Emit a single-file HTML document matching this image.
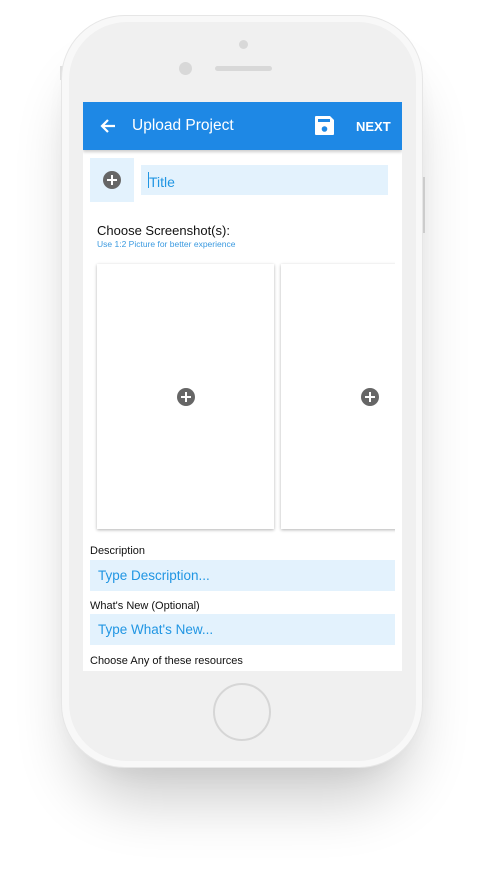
<!DOCTYPE html>
<html><head><style>
*{margin:0;padding:0;box-sizing:border-box}
body{width:485px;height:871px;background:#fff;position:relative;overflow:hidden;font-family:"Liberation Sans",Roboto,sans-serif}
.shadow{position:absolute;left:75px;top:40px;width:335px;height:725px;border-radius:64px;background:#ddd;box-shadow:0 35px 60px rgba(0,0,0,.2),0 0 30px rgba(0,0,0,.08)}
.phone{position:absolute;left:61px;top:15px;width:362px;height:753px;border-radius:64px;background:#f8f8f8;border:1px solid #e6e6e6}
.inner{position:absolute;left:69px;top:22px;width:347px;height:739px;border-radius:58px;background:#f0f0f0}
.btn{position:absolute;background:#e0e0e0}
.screen{position:absolute;left:83px;top:102px;width:319px;height:569px;background:#fff;overflow:hidden}
.bar{height:48px;background:#1e88e5;color:#fff;position:relative;box-shadow:0 2px 3px rgba(0,0,0,.2)}
.bar .t{position:absolute;left:49px;top:15px;font-size:15.5px}
.bar .n{position:absolute;left:273px;top:17px;font-size:13px;font-weight:bold}
.plus{position:absolute;width:18px;height:18px;border-radius:50%;background:#666}
.plus:before{content:"";position:absolute;left:4px;top:8px;width:10px;height:2px;background:#fff}
.plus:after{content:"";position:absolute;left:8px;top:4px;width:2px;height:10px;background:#fff}
.card{position:absolute;background:#fff;box-shadow:0 1px 3px rgba(0,0,0,.3)}
.lbl{position:absolute;font-size:11px;color:#111}
.inp{position:absolute;background:#e3f2fd;color:#2196e3;font-size:13.5px}
</style></head><body>
<div class="shadow"></div>
<div class="btn" style="left:60px;top:66px;width:3px;height:14px"></div>
<div class="btn" style="left:421px;top:177px;width:4px;height:56px;background:#ccc"></div>
<div class="phone"></div>
<div class="inner"></div>
<div style="position:absolute;left:239px;top:40px;width:9px;height:9px;border-radius:50%;background:#d8d8d8"></div>
<div style="position:absolute;left:179px;top:62px;width:13px;height:13px;border-radius:50%;background:#d8d8d8"></div>
<div style="position:absolute;left:215px;top:66px;width:57px;height:5px;border-radius:3px;background:#d8d8d8"></div>
<div style="position:absolute;left:213px;top:683px;width:58px;height:58px;border-radius:50%;border:2px solid #d6d6d6;background:#f0f0f0"></div>
<div class="screen">
 <div class="bar">
  <svg style="position:absolute;left:16px;top:15px" width="18" height="18" viewBox="0 0 18 18"><path d="M16 9H3M9 3L3 9l6 6" stroke="#fff" stroke-width="2.2" fill="none"/></svg>
  <div class="t">Upload Project</div>
  <svg style="position:absolute;left:231px;top:13px" width="21" height="21" viewBox="0 0 21 21"><path d="M2 1h14l4 4v14a1 1 0 0 1-1 1H2a1 1 0 0 1-1-1V2a1 1 0 0 1 1-1z" fill="#fff"/><rect x="4" y="4" width="12" height="3" fill="#1e88e5"/><circle cx="10.5" cy="14" r="2.8" fill="#1e88e5"/></svg>
  <div class="n">NEXT</div>
 </div>
 <div style="position:absolute;left:7px;top:56px;width:44px;height:44px;background:#e3f2fd"></div>
 <div class="plus" style="left:20px;top:69px"></div>
 <div class="inp" style="left:58px;top:63px;width:247px;height:30px;padding:9px 0 0 8px;font-size:14px">Title<span style="position:absolute;left:7px;top:7px;width:1px;height:16px;background:#2196e3"></span></div>
 <div style="position:absolute;left:14px;top:121px;font-size:13px;color:#111">Choose Screenshot(s):</div>
 <div style="position:absolute;left:14px;top:137px;font-size:8.5px;color:#3b9ae0">Use 1:2 Picture for better experience</div>
 <div class="card" style="left:14px;top:162px;width:177px;height:265px"></div>
 <div class="card" style="left:198px;top:162px;width:130px;height:265px"></div>
 <div style="position:absolute;left:312px;top:150px;width:7px;height:290px;background:#fff"></div>
 <div class="plus" style="left:94px;top:286px"></div>
 <div class="plus" style="left:278px;top:286px"></div>
 <div class="lbl" style="left:7px;top:443px">Description</div>
 <div class="inp" style="left:7px;top:458px;width:305px;height:31px;padding:8px 0 0 8px">Type Description...</div>
 <div class="lbl" style="left:7px;top:498px">What's New (Optional)</div>
 <div class="inp" style="left:7px;top:512px;width:305px;height:31px;padding:8px 0 0 8px">Type What's New...</div>
 <div class="lbl" style="left:7px;top:553px">Choose Any of these resources</div>
</div>
</body></html>
